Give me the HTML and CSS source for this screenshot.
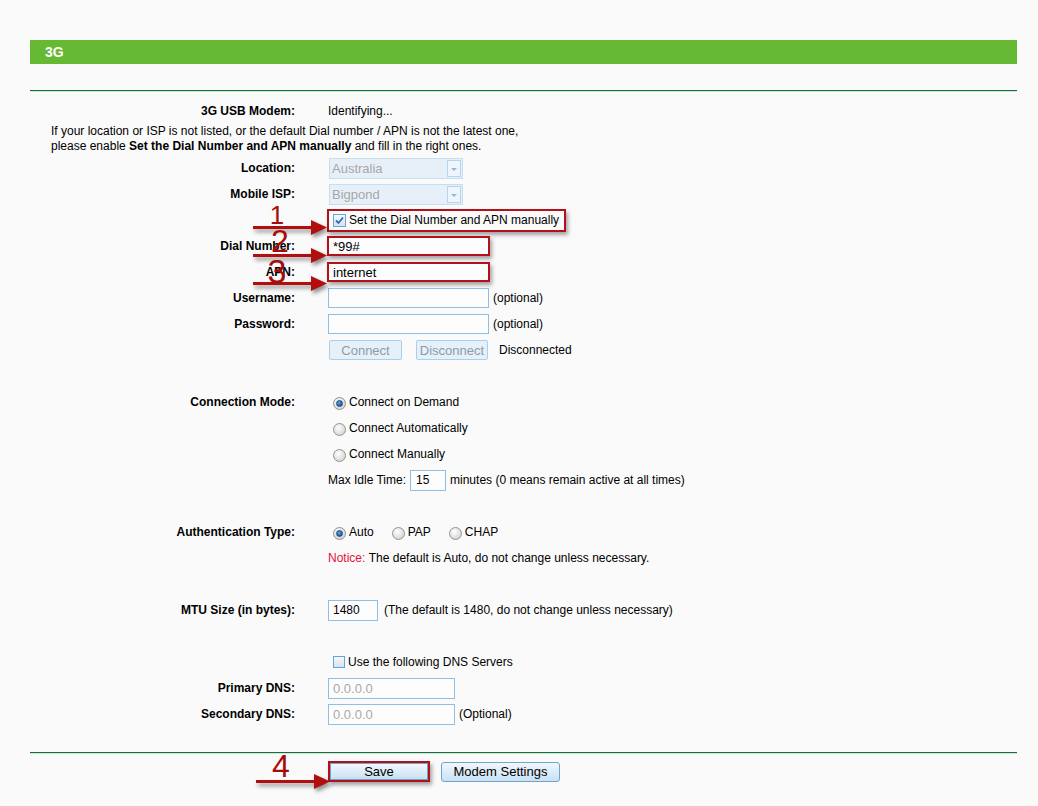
FILE: index.html
```html
<!DOCTYPE html>
<html lang="en">
<head>
  <meta charset="UTF-8" />
  <title>3G</title>
  <link rel="stylesheet" href="styles.css">
</head>
<body>
<div class="page">
  <div class="titlebar">3G</div>
  <div class="rule top"></div>

  <div class="form">
    <div class="row"><div class="label">3G USB Modem:</div><div class="value">Identifying...</div></div>
    <p class="hint">If your location or ISP is not listed, or the default Dial number / APN is not the latest one,<br>please enable <b>Set the Dial Number and APN manually</b> and fill in the right ones.</p>

    <div class="row"><div class="label">Location:</div><div class="value"><span class="select">Australia<span class="drop"></span></span></div></div>
    <div class="row"><div class="label">Mobile ISP:</div><div class="value"><span class="select">Bigpond<span class="drop"></span></span></div></div>
    <div class="row">
      <div class="label"></div>
      <div class="value">
        <span class="mark check-row">
          <span class="checkbox checked"><svg width="11" height="11" viewBox="0 0 11 11"><path d="M2 5.5 L4.5 8 L9 2.5" fill="none" stroke="#2f6db6" stroke-width="1.8"/></svg></span>
          Set the Dial Number and APN manually
        </span>
      </div>
    </div>
    <div class="row"><div class="label">Dial Number:</div><div class="value"><input class="field marked" type="text" value="*99#"></div></div>
    <div class="row"><div class="label">APN:</div><div class="value"><input class="field marked" type="text" value="internet"></div></div>
    <div class="row"><div class="label">Username:</div><div class="value"><input class="field" type="text"><span class="after">(optional)</span></div></div>
    <div class="row"><div class="label">Password:</div><div class="value"><input class="field" type="password"><span class="after">(optional)</span></div></div>
    <div class="row">
      <div class="label"></div>
      <div class="value">
        <button class="btn off connect">Connect</button>
        <button class="btn off disconnect">Disconnect</button>
        <span class="status">Disconnected</span>
      </div>
    </div>

    <div class="spacer"></div>

    <div class="row"><div class="label">Connection Mode:</div><div class="value"><span class="radio on"></span>Connect on Demand</div></div>
    <div class="row"><div class="label"></div><div class="value"><span class="radio"></span>Connect Automatically</div></div>
    <div class="row"><div class="label"></div><div class="value"><span class="radio"></span>Connect Manually</div></div>
    <div class="row"><div class="label"></div><div class="value">Max Idle Time:<input class="field idle" type="text" value="15">minutes (0 means remain active at all times)</div></div>

    <div class="spacer"></div>

    <div class="row">
      <div class="label">Authentication Type:</div>
      <div class="value">
        <span class="opt"><span class="radio on"></span>Auto</span>
        <span class="opt"><span class="radio"></span>PAP</span>
        <span class="opt"><span class="radio"></span>CHAP</span>
      </div>
    </div>
    <div class="row"><div class="label"></div><div class="value"><span class="notice">Notice:</span>&nbsp;The default is Auto, do not change unless necessary.</div></div>

    <div class="spacer"></div>

    <div class="row"><div class="label">MTU Size (in bytes):</div><div class="value"><input class="field mtu" type="text" value="1480"><span class="after wide">(The default is 1480, do not change unless necessary)</span></div></div>

    <div class="spacer"></div>

    <div class="row"><div class="label"></div><div class="value"><span class="checkbox dns"></span>Use the following DNS Servers</div></div>
    <div class="row"><div class="label">Primary DNS:</div><div class="value"><input class="field dnsfield" type="text" value="0.0.0.0"></div></div>
    <div class="row"><div class="label">Secondary DNS:</div><div class="value"><input class="field dnsfield" type="text" value="0.0.0.0"><span class="after">(Optional)</span></div></div>
  </div>

  <div class="rule bottom"></div>

  <div class="actions">
    <span class="mark save-mark"><button class="btn save">Save</button></span>
    <button class="btn modem">Modem Settings</button>
  </div>

  <svg class="notes" width="1038" height="806" viewBox="0 0 1038 806">
    <g class="arrow">
      <rect x="253" y="226" width="60" height="3"/>
      <polygon points="311,220 327,227.5 311,235"/>
      <rect x="253" y="254" width="60" height="3"/>
      <polygon points="311,248 327,255.5 311,263"/>
      <rect x="253" y="282" width="60" height="3"/>
      <polygon points="311,276 327,283.5 311,291"/>
      <rect x="256" y="780" width="60" height="3"/>
      <polygon points="314,774 330,781.5 314,789"/>
    </g>
    <g class="num">
      <text x="277" y="224" font-size="26">1</text>
      <text x="280" y="252" font-size="32">2</text>
      <text x="277" y="283" font-size="34">3</text>
      <text x="281" y="777" font-size="32">4</text>
    </g>
  </svg>
</div>
</body>
</html>
```

FILE: styles.css
```css
html, body {
  margin: 0;
  padding: 0;
  height: 100%;
  overflow: hidden;
  background: #fafafa;
  font-family: "Liberation Sans", Arial, sans-serif;
  font-size: 12px;
  color: #000;
}

.page {
  position: relative;
  box-sizing: border-box;
  height: 806px;
  padding: 40px 21px 0 30px;
}

.titlebar {
  height: 24px;
  line-height: 24px;
  padding-left: 15px;
  background: #66b933;
  color: #fff;
  font-size: 14px;
  font-weight: bold;
}

.rule {
  border-top: 1px solid #0f7238;
  border-bottom: 1px solid #d3e3d5;
}

.rule.top { margin-top: 26px; }
.rule.bottom { margin-top: 25px; }

.form { padding-top: 6px; }

.row {
  display: flex;
  align-items: center;
  height: 26px;
}

.spacer { height: 26px; }

.label {
  flex: none;
  width: 265px;
  text-align: right;
  font-weight: bold;
}

.value {
  display: flex;
  align-items: center;
  margin-left: 33px;
  white-space: nowrap;
}

.hint {
  margin: 0;
  padding: 0 0 1px 21px;
  line-height: 15px;
}

/* disabled dropdowns */
.select {
  box-sizing: border-box;
  display: flex;
  align-items: center;
  justify-content: space-between;
  width: 134px;
  height: 21px;
  margin-left: 1px;
  padding-left: 2px;
  border: 1px solid #c3dff1;
  background: #e7f0f9;
  color: #a7a7a7;
  font-size: 13px;
}

.drop {
  box-sizing: border-box;
  display: flex;
  align-items: center;
  justify-content: center;
  width: 14px;
  height: 17px;
  margin-right: 1px;
  border: 1px solid #b3d6ee;
  background: #eef5fc;
}

.drop::after {
  content: "";
  margin-top: 3px;
  border-left: 3px solid transparent;
  border-right: 3px solid transparent;
  border-top: 3px solid #8dbbe0;
}

/* red annotation frames */
.mark {
  border: 2px solid #b3111a;
  box-shadow: 2px 3px 4px rgba(0, 0, 0, 0.35);
}

.check-row {
  display: flex;
  align-items: center;
  height: 19px;
  margin-left: -1px;
  padding: 0 5px 0 4px;
}

.checkbox {
  box-sizing: border-box;
  display: inline-flex;
  align-items: center;
  justify-content: center;
  width: 13px;
  height: 13px;
  margin-right: 3px;
  border: 1px solid #6aa3d6;
  background: linear-gradient(#f4f8fc, #d5e3f0);
}

.checkbox.dns {
  margin-left: 5px;
  width: 12px;
  height: 12px;
}

.field {
  box-sizing: border-box;
  width: 161px;
  height: 20px;
  margin: 0;
  padding: 0 4px;
  border: 1px solid #8fc0e3;
  background: #fdfdfe;
  font-family: "Liberation Sans", Arial, sans-serif;
  font-size: 13px;
  color: #000;
  outline: none;
}

.field.marked {
  width: 163px;
  margin-left: -1px;
  border: 2px solid #b3111a;
  padding-left: 4px;
  box-shadow: 2px 3px 4px rgba(0, 0, 0, 0.35);
}

.field.idle {
  width: 36px;
  height: 21px;
  margin: 0 4px;
  padding-left: 5px;
  font-size: 12px;
}

.field.mtu {
  width: 50px;
  height: 21px;
  font-size: 12px;
}

.field.dnsfield {
  width: 127px;
  height: 21px;
  color: #a9a9a9;
}

.after { margin-left: 4px; }
.after.wide { margin-left: 6px; }

.btn {
  box-sizing: border-box;
  height: 20px;
  margin: 0;
  padding: 0;
  border: 1px solid #6ea5d0;
  border-radius: 3px;
  background: linear-gradient(#f1f7fc, #c9e1f3);
  font-family: "Liberation Sans", Arial, sans-serif;
  font-size: 13px;
  color: #000;
}

.btn.off {
  border-color: #a8d0ec;
  border-radius: 2px;
  background: #e5f0f9;
  color: #8d9ba8;
}

.connect { width: 73px; margin-left: 1px; }
.disconnect { width: 72px; margin-left: 14px; }
.status { margin-left: 11px; }

.radio {
  position: relative;
  box-sizing: border-box;
  display: inline-block;
  width: 13px;
  height: 13px;
  margin: 3px 3px 0 5px;
  border: 1px solid #939393;
  border-radius: 50%;
  background: radial-gradient(circle at 40% 35%, #ffffff, #d6d6d6 75%);
}

.radio.on::after {
  content: "";
  position: absolute;
  left: 2px;
  top: 2px;
  width: 5px;
  height: 5px;
  border: 1px solid #164a7e;
  border-radius: 50%;
  background: radial-gradient(circle at 40% 35%, #6fa4d8, #1d5c9a 70%);
}

.opt {
  display: inline-flex;
  align-items: center;
  margin-right: 13px;
}

.notice { color: #e4123c; }

.actions {
  display: flex;
  align-items: center;
  padding: 7px 0 0 298px;
}

.save-mark {
  display: flex;
  height: 17px;
}

.btn.save {
  width: 98px;
  height: 17px;
  border-radius: 0;
}

.btn.modem {
  width: 119px;
  margin-left: 11px;
}

.notes {
  position: absolute;
  left: 0;
  top: 0;
  pointer-events: none;
}

.arrow {
  fill: #b10e0e;
  filter: drop-shadow(2px 3px 2px rgba(0, 0, 0, 0.45));
}

.num text {
  fill: #a60c0c;
  font-family: "Liberation Sans", Arial, sans-serif;
  text-anchor: middle;
}
```
